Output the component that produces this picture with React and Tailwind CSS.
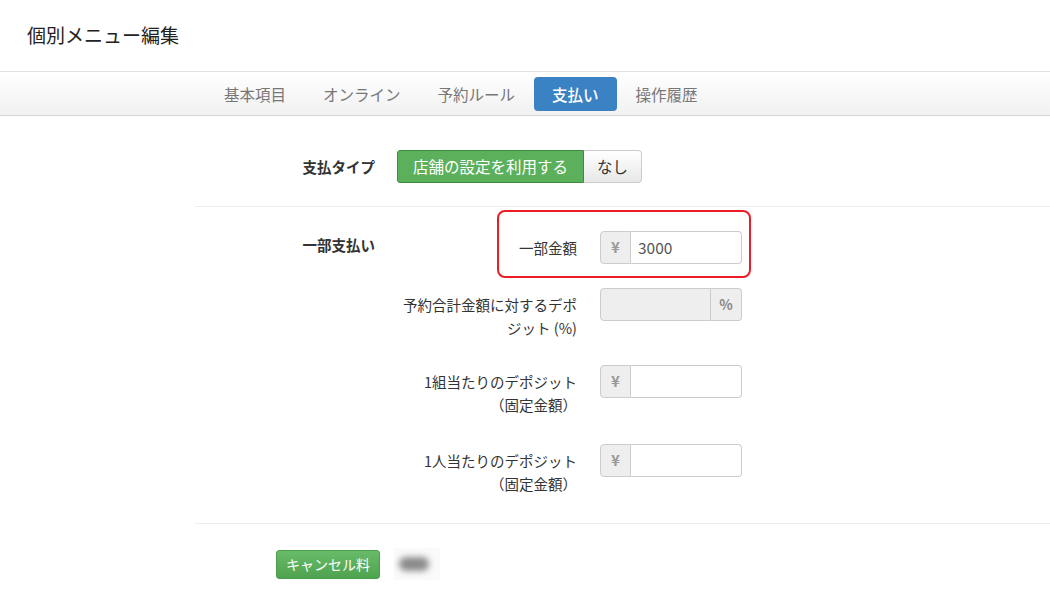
import React from 'react';

const tabs = ['基本項目', 'オンライン', '予約ルール', '支払い', '操作履歴'];

function YenInput({ value }) {
  return (
    <div className="flex h-[33px] w-[142px]">
      <span className="flex w-[31px] items-center justify-center rounded-l-[4px] border border-[#ccc] bg-[#eee] text-[15px] font-bold text-[#999]">
        ¥
      </span>
      <input
        readOnly
        defaultValue={value}
        className="w-[111px] rounded-r-[4px] border border-l-0 border-[#ccc] bg-white px-[7px] text-[15.5px] text-[#555] outline-none"
      />
    </div>
  );
}

function SubRow({ children, label, className = '' }) {
  return (
    <div className={`relative flex items-start ${className}`}>
      <div className="w-[180px] whitespace-nowrap pt-[5px] text-right text-[14.5px] leading-[23px] text-[#333]">
        {label}
      </div>
      <div className="ml-[23px]">{children}</div>
    </div>
  );
}

export default function App() {
  return (
    <div
      className="h-[612px] w-[1050px] overflow-hidden bg-white text-[#333]"
      style={{ fontFamily: '"Noto Sans CJK JP", "Noto Sans", sans-serif' }}
    >
      {/* Header */}
      <div className="flex h-[71px] items-center px-[27px]">
        <h1 className="text-[19px] font-normal text-[#222]">個別メニュー編集</h1>
      </div>

      {/* Tabs */}
      <div className="flex h-[45px] items-center gap-[1px] border-t border-b border-t-[#e2e2e2] border-b-[#d6d6d6] bg-gradient-to-b from-white to-[#f1f1f1] pl-[206px]">
        {tabs.map((t) =>
          t === '支払い' ? (
            <div key={t} className="h-[34px] rounded-[4px] bg-[#3a82c4] px-[18px] text-[15.5px] font-medium leading-[34px] text-white">
              {t}
            </div>
          ) : (
            <div key={t} className="h-[34px] px-[18px] text-[15.5px] leading-[34px] text-[#777]">
              {t}
            </div>
          )
        )}
      </div>

      {/* Payment type */}
      <div className="ml-[195px] flex items-center border-b border-[#eee] pt-[34px] pb-[23px]">
        <div className="w-[180px] text-right text-[14.5px] font-bold">支払タイプ</div>
        <div className="ml-[22px] flex h-[33px]">
          <div className="flex items-center rounded-l-[3px] border border-[#3d8b3d] bg-[#5cb05c] px-[15px] text-[15.5px] text-white">
            店舗の設定を利用する
          </div>
          <div className="flex items-center rounded-r-[4px] border border-l-0 border-[#ccc] bg-gradient-to-b from-white to-[#e8e8e8] px-[13px] text-[15.5px] text-[#333]">
            なし
          </div>
        </div>
      </div>

      {/* Partial payment */}
      <div className="ml-[195px] flex items-start border-b border-[#eee] pt-[24px] pb-[28px]">
        <div className="w-[180px] pt-[2px] text-right text-[14.5px] font-bold leading-[23px]">一部支払い</div>
        <div className="ml-[22px] flex flex-col">
          <SubRow label="一部金額">
            <YenInput value="3000" />
            <div className="pointer-events-none absolute top-[-21px] left-[100px] h-[68px] w-[254px] rounded-[8px] border-2 border-[#ee1c24]" />
          </SubRow>

          <SubRow
            className="mt-[24px]"
            label={
              <>
                予約合計金額に対するデポ
                <br />
                ジット (%)
              </>
            }
          >
            <div className="flex h-[33px] w-[142px]">
              <input readOnly className="w-[111px] rounded-l-[4px] border border-[#ccc] bg-[#eee] outline-none" />
              <span className="flex w-[31px] items-center justify-center rounded-r-[4px] border border-l-0 border-[#ccc] bg-[#eee] text-[14px] font-bold text-[#888]">
                %
              </span>
            </div>
          </SubRow>

          <SubRow
            className="mt-[26px]"
            label={
              <>
                1組当たりのデポジット
                <br />
                （固定金額）
              </>
            }
          >
            <YenInput value="" />
          </SubRow>

          <SubRow
            className="mt-[28px]"
            label={
              <>
                1人当たりのデポジット
                <br />
                （固定金額）
              </>
            }
          >
            <YenInput value="" />
          </SubRow>
        </div>
      </div>

      {/* Cancel fee */}
      <div className="ml-[195px] flex items-center pt-[24px]">
        <div className="flex w-[185px] justify-end">
          <button className="h-[29px] w-[104px] rounded-[3px] border border-[#4a9f4a] bg-gradient-to-b from-[#68bb68] to-[#4fa34f] text-[14px] text-white">
            キャンセル料
          </button>
        </div>
        <div className="ml-[14px] flex h-[32px] w-[46px] items-center bg-[#fafafa]">
          <div className="ml-[5px] h-[14px] w-[30px] rounded-full bg-[#8a8a8a] blur-[3px]" />
        </div>
      </div>
    </div>
  );
}
